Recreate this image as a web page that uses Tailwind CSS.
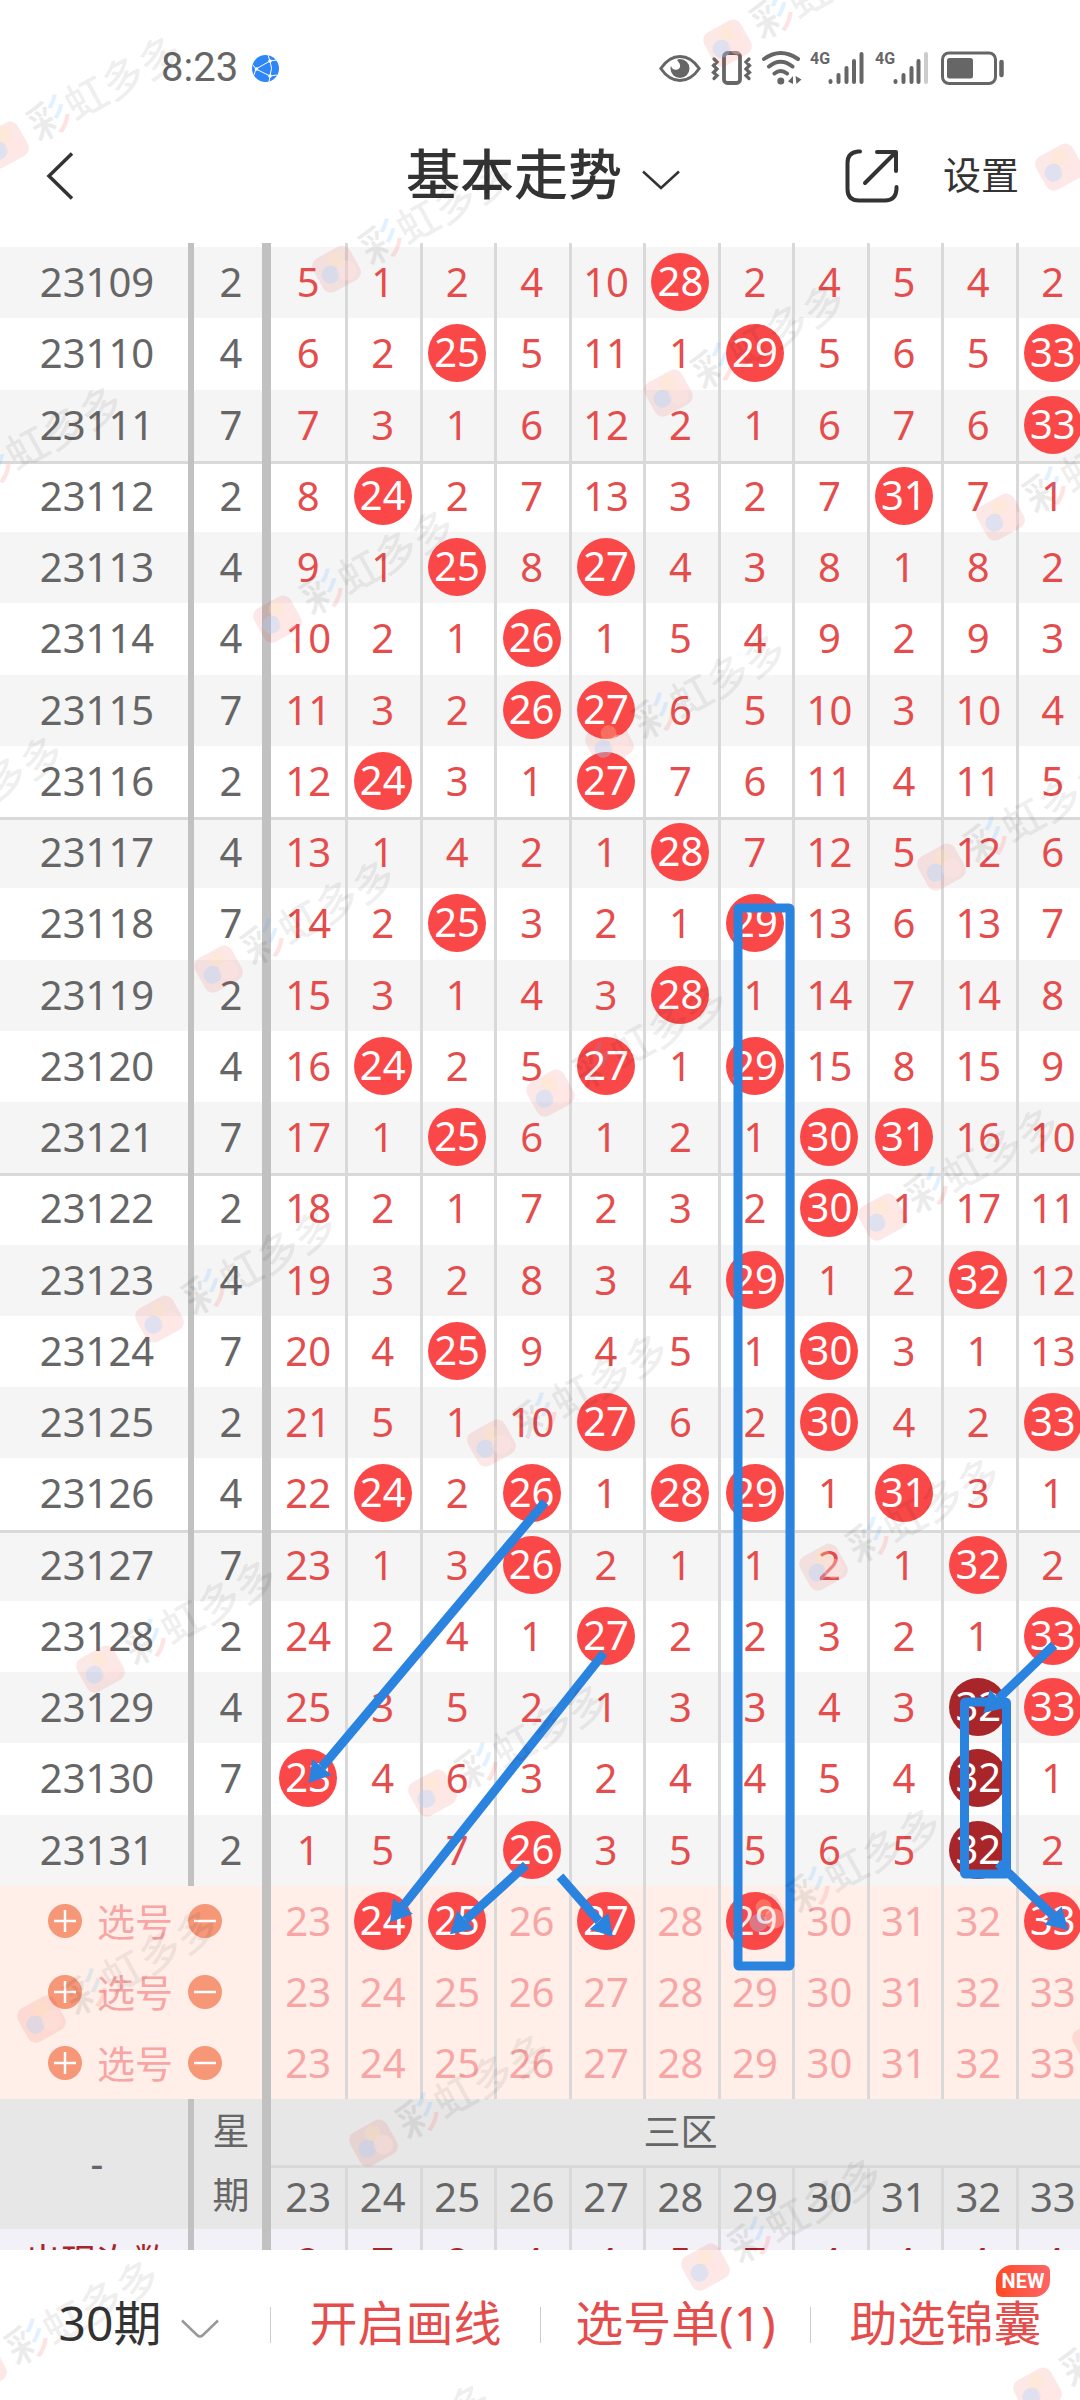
<!DOCTYPE html>
<html lang="zh-CN">

<head>
  <meta charset="UTF-8">
  <meta name="viewport" content="width=device-width, initial-scale=1.0">
  <title>基本走势</title>
  <script src="https://cdn.jsdelivr.net/npm/@tailwindcss/browser@4"></script>
</head>

<body class="bg-white font-['Noto_Sans','Noto_Sans_CJK_SC',sans-serif] text-[#333]">
  <div class="relative h-screen flex flex-col overflow-hidden">

    <!-- Status bar -->
    <div class="h-[108px] shrink-0 pt-7 pl-[161px] pr-[76px] flex items-center justify-between text-[#666]">
      <div class="flex items-center gap-[14px]">
        <span class="font-[Roboto] text-[40px] leading-10">8:23</span>
        <svg class="w-[27px] h-[27px]" viewBox="0 0 27 27" fill="none" stroke="#fff">
          <circle cx="13.5" cy="13.5" r="13.5" fill="#2f86f6" stroke="none" />
          <path d="M4 14 L18 6 M4 14 L18 21 M18 6 Q21 13 18 21 M4 14 L1 10 M4 14 L2 20 M18 6 L25 5 M18 6 L16 0 M18 21 L17 27 M18 21 L25 20" stroke-width="1" />
          <circle cx="4.500" cy="14" r="1.800" fill="#fff" stroke="none" />
          <circle cx="18" cy="6" r="1.800" fill="#fff" stroke="none" />
          <circle cx="18" cy="21" r="1.800" fill="#fff" stroke="none" />
        </svg>
      </div>
      <div class="flex items-center gap-[10px]">
        <!-- eye -->
        <svg class="w-[42px] h-[34px]" viewBox="0 0 42 34" fill="none" stroke="#666" stroke-width="3">
          <path d="M1.800 17.500 Q10 5.500 21 5.500 T40.200 17.500 Q32 29.500 21 29.500 T1.800 17.500 Z" />
          <path d="M21 8 a9.500 9.500 0 1 1 -9.500 9.500 q0 -1.500 .5 -2.500 q2 5 6.500 3.500 q4 -2 2 -6 q-1.500 -2.500 -2.500 -3.500 q1.500 -1 3 -1z" fill="#666" stroke="none" />
        </svg>
        <!-- vibrate -->
        <svg class="w-[41px] h-[34px]" viewBox="0 0 41 34" fill="none" stroke="#666" stroke-width="3.200" stroke-linecap="round">
          <rect x="13" y="2" width="16" height="30" rx="3.500" stroke-width="3.800" />
          <path d="M3 8 L6 11 L2.500 14.500 L6 18 L2.500 21.500 L6 24.500 L3 27.500 M38 8 L35 11 L38.500 14.500 L35 18 L38.500 21.500 L35 24.500 L38 27.500" />
        </svg>
        <!-- wifi -->
        <svg class="w-[38px] h-[34px] overflow-visible" viewBox="0 0 38 34" fill="none" stroke="#666" stroke-width="4" stroke-linecap="round">
          <path d="M2 8 Q18.500 -4 36 8 M7 15.500 Q18.500 6 30.500 15.500 M12.500 22.500 Q18.500 17.500 25 22.500" />
          <circle cx="18.800" cy="30" r="3.500" fill="#666" stroke="none" />
          <path d="M31 25 V33 L26 30.500 Z M33.500 25 L39.500 28.500 L34.500 33 Z" fill="#666" stroke="none" />
        </svg>
        <!-- signal -->
        <svg class="w-[55px] h-[34px]" viewBox="0 0 55 34" stroke="#666" stroke-width="4" stroke-linecap="round">
          <text x="0" y="13" font-family="Roboto" font-size="16" font-weight="700" fill="#666" stroke="none">4G</text>
          <path d="M20.500 30 V31 M28.500 24 V31 M36.500 17 V31 M44 10 V31 M51.500 3 V31" />
        </svg>
        <svg class="w-[56px] h-[34px]" viewBox="0 0 56 34" stroke="#666" stroke-width="4" stroke-linecap="round">
          <text x="0" y="13" font-family="Roboto" font-size="16" font-weight="700" fill="#666" stroke="none">4G</text>
          <path d="M20.500 30 V31 M28.500 24 V31 M36.500 17 V31 M43.500 10 V31" />
          <path d="M51 3 V31" stroke="#ccc" />
        </svg>
        <!-- battery -->
        <svg class="w-[63px] h-[34px]" viewBox="0 0 63 34" fill="none" stroke="#666" stroke-width="3">
          <rect x="1.500" y="2" width="53" height="30.500" rx="6.500" />
          <rect x="6" y="7" width="26" height="20.500" rx="2.500" fill="#666" stroke="none" />
          <path d="M60.500 11 V24" stroke-width="4.500" stroke-linecap="round" />
        </svg>
      </div>
    </div>

    <!-- Title bar -->
    <header class="h-[135px] shrink-0 px-[46px] grid grid-cols-[1fr_auto_1fr] items-center">
      <button type="button" aria-label="返回" class="justify-self-start">
        <svg class="w-[28px] h-[48px]" viewBox="0 0 28 48" fill="none" stroke="#333" stroke-width="3.500"><path d="M26 1.500 L3 24 L26 46.500" /></svg>
      </button>
      <button type="button" class="flex items-center gap-5 pl-[6px]">
        <h1 class="pb-1 text-[54px] leading-[72px] font-medium">基本走势</h1>
        <svg class="w-[38px] h-[20px] mt-2" viewBox="0 0 38 20" fill="none" stroke="#333" stroke-width="2.500"><path d="M1 1.500 L19 18 L37 1.500" /></svg>
      </button>
      <div class="justify-self-end flex items-center gap-[44px] pr-[15px]">
        <button type="button" aria-label="分享">
          <svg class="w-[54px] h-[54px]" viewBox="0 0 54 54" fill="none" stroke="#333" stroke-width="4" stroke-linecap="round">
            <path d="M15 2.500 H13 Q2.500 3.500 2.500 14 V40 Q2.500 51.500 14 51.500 H40 Q51 51.500 51.500 40 V38" />
            <path d="M20 34 L50 4 M32 3 H51 V22" stroke-linejoin="round" />
          </svg>
        </button>
        <button type="button" class="pb-1 text-[38px] leading-[48px]">设置</button>
      </div>
    </header>

    <!-- Trend chart -->
    <main class="relative flex-1 min-h-0 overflow-hidden">
      <table class="w-[calc(100%+10px)] table-fixed border-separate border-spacing-0 text-[40px] leading-[56px] text-center">
        <colgroup>
          <col class="w-[194px]">
          <col class="w-[77px]">
          <col><col><col><col><col><col><col><col><col><col><col>
        </colgroup>
        <tbody id="trend"></tbody>
        <tbody id="picks"></tbody>
        <tbody id="summary"></tbody>
      </table>

      <!-- Hand-drawn boxes and arrows -->
      <svg class="absolute left-0 top-0 w-[1080px] h-[2007px] pointer-events-none" viewBox="0 243 1080 2007" fill="none" stroke="#2b83e0" stroke-width="9">
        <defs>
          <marker id="head" markerUnits="userSpaceOnUse" markerWidth="30" markerHeight="30" orient="auto" overflow="visible">
            <path d="M0 -12.500 L21 0 L0 12.500 Z" fill="#2b83e0" stroke="none" />
          </marker>
        </defs>
        <rect x="738" y="908" width="52" height="1058" rx="1" />
        <rect x="964.500" y="1702" width="42" height="172" rx="1" />
        <path d="M545 1502 L322 1767" marker-end="url(#head)" />
        <path d="M604 1653 L403 1906" marker-end="url(#head)" />
        <path d="M526 1865 L465.500 1920" marker-end="url(#head)" />
        <path d="M560 1876.500 L599 1921" marker-end="url(#head)" />
        <path d="M1054 1645 L998.500 1698.500" marker-end="url(#head)" />
        <path d="M998 1863 L1053 1915.500" marker-end="url(#head)" />
      </svg>
    </main>

    <!-- Bottom bar -->
    <footer class="h-[150px] shrink-0 bg-white grid grid-cols-4 items-center text-[48px] leading-[60px] text-[#e54d4d]">
      <button type="button" class="flex items-center justify-center gap-5 pl-2 text-[#333]">
        <span class="pb-1">30期</span>
        <svg class="w-[38px] h-[20px] mt-2" viewBox="0 0 38 20" fill="none" stroke="#999" stroke-width="2.500"><path d="M1 1.500 L16 16 Q19 19 22 16 L37 1.500" /></svg>
      </button>
      <div class="flex items-center"><i class="w-px h-9 bg-[#ccc]"></i><button type="button" class="flex-1 pb-1">开启画线</button></div>
      <div class="flex items-center"><i class="w-px h-9 bg-[#ccc]"></i><button type="button" class="flex-1 pb-1">选号单(1)</button></div>
      <div class="flex items-center"><i class="w-px h-9 bg-[#ccc]"></i>
        <button type="button" class="flex-1 pb-1 relative">助选锦囊
          <span class="absolute right-[30px] -top-[28px] w-[54px] h-8 rounded-tl-[16px] rounded-br-[16px] rounded-tr-[6px] rounded-bl-[6px] bg-linear-to-r from-[#ff4a1c] to-[#ff6464] font-[Roboto] font-bold text-[20px] leading-8 text-white text-center">NEW</span>
        </button>
      </div>
    </footer>

    <!-- Watermark layer -->
    <svg class="absolute inset-0 w-full h-full pointer-events-none" aria-hidden="true">
      <defs>
        <pattern id="rainbow" patternUnits="userSpaceOnUse" x="31" y="-23" width="42" height="42">
          <rect width="25" height="42" fill="#000" fill-opacity=".08" />
          <rect x="25" width="17" height="24" fill="#4aa8ff" fill-opacity=".16" />
          <rect x="25" y="24" width="17" height="18" fill="#ff5050" fill-opacity=".16" />
        </pattern>
      </defs>
      <g id="marks"></g>
    </svg>
  </div>

  <script>
    // period, weekday, then columns 23..33; * = drawn number, # = repeated number
    const rows = `23109 2 5 1 2 4 10 *28 2 4 5 4 2
23110 4 6 2 *25 5 11 1 *29 5 6 5 *33
23111 7 7 3 1 6 12 2 1 6 7 6 *33
23112 2 8 *24 2 7 13 3 2 7 *31 7 1
23113 4 9 1 *25 8 *27 4 3 8 1 8 2
23114 4 10 2 1 *26 1 5 4 9 2 9 3
23115 7 11 3 2 *26 *27 6 5 10 3 10 4
23116 2 12 *24 3 1 *27 7 6 11 4 11 5
23117 4 13 1 4 2 1 *28 7 12 5 12 6
23118 7 14 2 *25 3 2 1 *29 13 6 13 7
23119 2 15 3 1 4 3 *28 1 14 7 14 8
23120 4 16 *24 2 5 *27 1 *29 15 8 15 9
23121 7 17 1 *25 6 1 2 1 *30 *31 16 10
23122 2 18 2 1 7 2 3 2 *30 1 17 11
23123 4 19 3 2 8 3 4 *29 1 2 *32 12
23124 7 20 4 *25 9 4 5 1 *30 3 1 13
23125 2 21 5 1 10 *27 6 2 *30 4 2 *33
23126 4 22 *24 2 *26 1 *28 *29 1 *31 3 1
23127 7 23 1 3 *26 2 1 1 2 1 *32 2
23128 2 24 2 4 1 *27 2 2 3 2 1 *33
23129 4 25 3 5 2 1 3 3 4 3 #32 *33
23130 7 *23 4 6 3 2 4 4 5 4 #32 1
23131 2 1 5 7 *26 3 5 5 6 5 #32 2`.split('\n').map(r => r.split(' '));

    const first = 'p-0 pb-[2px] pl-[6px] border-r-[6px] border-[#c1c1c1]';
    const second = 'p-0 pb-[2px] pl-[6px] border-r-[9px] border-[#c1c1c1]';
    const line = i => i ? 'p-0 pb-[2px] pr-[3px] border-l-[3px] border-[#d9d9d9]' : 'p-0 pb-[2px]';
    const ball = (n, color) => `<span class="block w-[58px] h-[58px] mx-auto rounded-full text-white ${color}">${n}</span>`;
    const cell = v => v[0] === '*' ? ball(v.slice(1), 'bg-[#fa4848]') : v[0] === '#' ? ball(v.slice(1), 'bg-[#a82629]') : v;
    const nums = [23, 24, 25, 26, 27, 28, 29, 30, 31, 32, 33];

    let html = `<tr class="h-1"><td class="${first}"></td><td class="${second}"></td>${nums.map((n, i) => `<td class="${line(i)}"></td>`).join('')}</tr>`;
    rows.forEach((r, k) => {
      const h = k % 4 === 1 ? 'h-[72px]' : 'h-[71px]';
      const bg = k % 2 ? 'bg-white' : 'bg-[#f5f5f5]';
      const top = k % 5 === 3 ? 'shadow-[inset_0_3px_#d9d9d9]' : '';
      html += `<tr class="${h} ${bg} text-[#e54d4d]">
        <td class="${first} ${top} text-[#666]">${r[0]}</td><td class="${second} ${top} text-[#666]">${r[1]}</td>
        ${r.slice(2).map((v, i) => `<td class="${line(i)} ${top}">${cell(v)}</td>`).join('')}</tr>`;
    });
    document.getElementById('trend').innerHTML = html;

    // rows for picking numbers
    const picked = [[24, 25, 27, 29, 33], [], []];
    const round = 'w-[34px] h-[34px] rounded-full bg-[#f69777] flex items-center justify-center';
    document.getElementById('picks').innerHTML = picked.map(p => `<tr class="h-[71px] bg-[#ffefe8] text-[#f8a5a5]">
      <td colspan="2" class="${second}"><div class="flex items-center gap-[15px] pl-[42px]">
        <button type="button" aria-label="添加" class="${round}"><svg class="w-[22px] h-[22px]" viewBox="0 0 22 22" stroke="#fff" stroke-width="2.500"><path d="M0 11 H22 M11 0 V22" /></svg></button>
        <span class="text-[38px]">选号</span>
        <button type="button" aria-label="删除" class="${round}"><svg class="w-[22px] h-[22px]" viewBox="0 0 22 22" stroke="#fff" stroke-width="2.500"><path d="M0 11 H22" /></svg></button>
      </div></td>
      ${nums.map((n, i) => `<td class="${line(i)}">${p.includes(n) ? ball(n, 'bg-[#fa4848]') : n}</td>`).join('')}</tr>`).join('');

    // column heads and totals
    const totals = [2, 7, 8, 4, 4, 5, 7, 4, 4, 4, 4];
    document.getElementById('summary').innerHTML = `
      <tr class="h-[68px] bg-[#e7e7e7] text-[#666]">
        <th rowspan="2" class="${first} font-normal">-</th>
        <th rowspan="2" class="${second} font-normal text-[37px] leading-[64px]">星<br>期</th>
        <th colspan="11" class="p-0 border-b-[3px] border-[#d9d9d9] font-normal text-[37px]">三区</th>
      </tr>
      <tr class="h-[61px] bg-[#e7e7e7] text-[#666]">${nums.map((n, i) => `<th class="${line(i)} font-normal">${n}</th>`).join('')}</tr>
      <tr class="h-[68px] bg-[#f2f1f7] text-[#a82629]">
        <td class="${first} text-[36px]">出现次数</td><td class="${second}"></td>
        ${totals.map((n, i) => `<td class="${line(i)}">${n}</td>`).join('')}
      </tr>`;

    // watermark grid
    let marks = '';
    for (let a = -3; a < 6; a++) {
      for (let b = -3; b < 9; b++) {
        const x = 337 + 332 * a - 59 * b, y = 270 + 124 * a + 350 * b;
        if (x < -220 || x > 1120 || y < -40 || y > 2560) continue;
        marks += `<g transform="translate(${x} ${y}) rotate(-29)">
          <rect x="-21" y="-20" width="42" height="38" rx="9" fill="#f03030" fill-opacity=".11" />
          <circle cx="4" cy="-10" r="8" fill="#ffe9b0" fill-opacity=".25" />
          <circle cx="-8" cy="1" r="9" fill="#a8d4ff" fill-opacity=".35" />
          <circle cx="8" cy="5" r="10" fill="#ffe6dc" fill-opacity=".35" />
          <text x="31" y="13" font-size="42" font-weight="500" fill="url(#rainbow)">彩</text>
          <text x="73" y="13" font-size="42" font-weight="500" fill="#000" fill-opacity=".08">虹多多</text>
        </g>`;
      }
    }
    document.getElementById('marks').innerHTML = marks;
  </script>
</body>

</html>
